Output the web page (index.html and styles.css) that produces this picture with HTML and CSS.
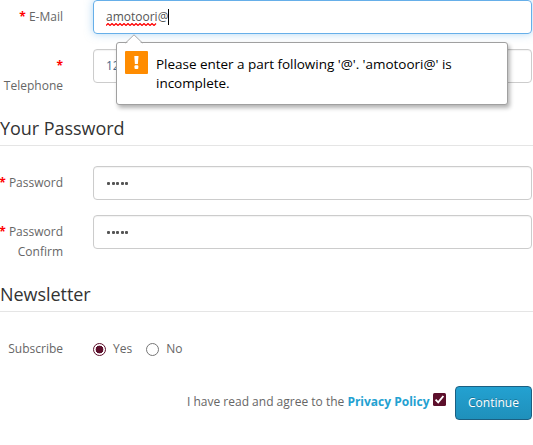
FILE: index.html
```
<!DOCTYPE html>
<html lang="en">
<head>
<meta charset="utf-8">
<title>Register Account</title>
<link rel="stylesheet" href="styles.css">
</head>
<body>
<form class="form">
  <div class="row">
    <label class="label"><span class="star">*</span> E-Mail</label>
    <div class="field focused"><span class="misspelt">amotoori<svg class="wave" width="51" height="3" viewBox="0 0 51 3"><path d="M0 2.5 L2 .5 L4 2.5 L6 .5 L8 2.5 L10 .5 L12 2.5 L14 .5 L16 2.5 L18 .5 L20 2.5 L22 .5 L24 2.5 L26 .5 L28 2.5 L30 .5 L32 2.5 L34 .5 L36 2.5 L38 .5 L40 2.5 L42 .5 L44 2.5 L46 .5 L48 2.5 L50 .5"/></svg></span>@<i class="caret"></i>
      <div class="tip">
        <svg class="arrow" width="18" height="10" viewBox="0 0 18 10"><path class="arrow-fill" d="M1 10 L9 1 L17 10Z"/><path class="arrow-line" d="M.5 9 L9 .8 L17.5 9"/></svg>
        <svg class="warn" width="23" height="23" viewBox="0 0 23 23"><rect width="23" height="23" rx="1" fill="#ff8c00"/><path d="M9.3 5h4.2l-.6 8h-3z" fill="#fff"/><rect x="9.5" y="14.2" width="3.8" height="3.8" rx="1" fill="#fff"/></svg>
        <p class="message"><span class="line">Please enter a part following '@'. 'amotoori@' is</span><span class="line">incomplete.</span></p>
      </div>
    </div>
  </div>
  <div class="row telephone">
    <label class="label"><span class="star">*</span> Telephone</label>
    <div class="field phone">12</div>
  </div>
  <h2 class="legend">Your Password</h2>
  <div class="row">
    <label class="label"><span class="star">*</span> Password</label>
    <div class="field"><span class="dots"><i></i><i></i><i></i><i></i><i></i></span></div>
  </div>
  <div class="row confirm">
    <label class="label"><span class="star">*</span> Password Confirm</label>
    <div class="field"><span class="dots"><i></i><i></i><i></i><i></i><i></i></span></div>
  </div>
  <h2 class="legend">Newsletter</h2>
  <div class="row subscribe">
    <span class="label">Subscribe</span>
    <div class="choices">
      <label class="choice"><i class="radio on"></i>Yes</label>
      <label class="choice"><i class="radio"></i>No</label>
    </div>
  </div>
  <div class="actions">
    <span class="agree">I have read and agree to the <b>Privacy Policy</b></span>
    <svg class="check" width="13" height="13" viewBox="0 0 13 13"><rect width="13" height="13" rx="1.5" fill="#5c0f2b"/><path d="M2.6 6.7 L5.2 9.4 L10.4 3" fill="none" stroke="#fff" stroke-width="1.9"/></svg>
    <button class="continue" type="button">Continue</button>
  </div>
</form>
</body>
</html>
```
FILE: styles.css
```
* { box-sizing: border-box; }
body {
  margin: 0;
  background: #fff;
  color: #666;
  font: 12px/20px "Open Sans", sans-serif;
  overflow: hidden;
}
.form { width: 532px; }
.row {
  display: grid;
  grid-template-columns: 63px 439px;
  column-gap: 30px;
  align-items: start;
  margin-bottom: 15px;
}
.label {
  padding-top: 7px;
  text-align: right;
  margin-left: -2px;
}
.star { color: #f00; font-weight: bold; }
.field {
  position: relative;
  display: flex;
  align-items: center;
  height: 34px;
  padding: 0 12px;
  border: 1px solid #ccc;
  border-radius: 4px;
  color: #555;
  box-shadow: inset 0 1px 1px rgba(0, 0, 0, .05);
}
.phone { color: #46688c; }
.focused {
  border-color: #66afe9;
  box-shadow: 0 0 8px rgba(102, 175, 233, .5);
}
.misspelt { position: relative; }
.wave {
  position: absolute;
  left: 0;
  bottom: 1px;
  fill: none;
  stroke: #f00;
  stroke-width: 1.2;
}
.caret { width: 1px; height: 16px; background: #000; }
.tip {
  position: absolute;
  z-index: 2;
  left: 22px;
  top: 41px;
  display: flex;
  gap: 8px;
  width: 392px;
  height: 63px;
  padding: 8px;
  border: 1px solid #a0a0a0;
  border-radius: 3px;
  background: #fff;
  box-shadow: 2px 3px 4px rgba(0, 0, 0, .3);
}
.arrow { position: absolute; left: 8px; top: -9px; }
.arrow-fill { fill: #fff; }
.arrow-line { fill: none; stroke: #aaa; }
.warn { flex: none; }
.message {
  margin: 4px 0 0;
  color: #000;
  font: 13.5px/19px "Open Sans", sans-serif;
  letter-spacing: -.03px;
  white-space: nowrap;
}
.line { display: block; }
.telephone { margin-bottom: 17px; }
.legend {
  margin: 0 0 20px;
  width: 533px;
  height: 33px;
  border-bottom: 1px solid #e5e5e5;
  color: #333;
  font: 18px/30px "Open Sans", sans-serif;
  letter-spacing: -.05px;
}
.confirm { margin-bottom: 17px; }
.dots { display: flex; gap: 1.5px; padding-left: 1px; }
.dots i { width: 3px; height: 3px; border-radius: 1px; background: #555; }
.subscribe { margin-bottom: 27px; }
.choices { display: flex; gap: 14px; padding-top: 7px; }
.choice { display: flex; align-items: center; gap: 7px; }
.radio {
  width: 13px;
  height: 13px;
  border: 1px solid #767676;
  border-radius: 50%;
}
.radio.on {
  border-color: #5c0f2b;
  background: radial-gradient(circle, #5c0f2b 3.6px, #fff 4.2px);
}
.actions { display: flex; justify-content: flex-end; }
.agree { padding-top: 6px; }
.agree b { color: #23a1d1; }
.check { margin: 7px 9px 0 3.5px; }
.continue {
  width: 77px;
  height: 34px;
  padding: 0;
  border: 1px solid #1b5f82;
  border-radius: 4px;
  background: linear-gradient(#23a1d1, #1f90bb);
  color: #fff;
  font: 12px/20px "Open Sans", sans-serif;
  text-shadow: 0 -1px 0 rgba(0, 0, 0, .25);
}
```
